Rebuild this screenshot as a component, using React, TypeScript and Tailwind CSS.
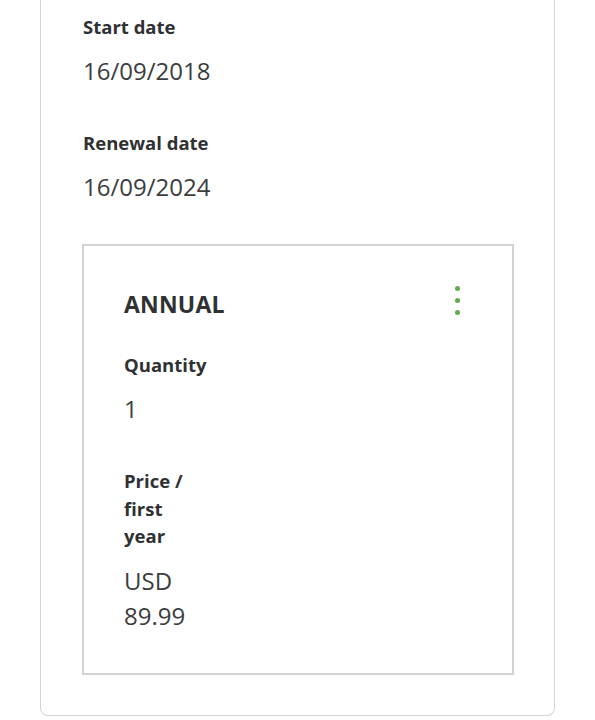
const font = { fontFamily: '"Open Sans", "Liberation Sans", sans-serif' }

function Field({ label, value, className = '' }: { label: string; value: string; className?: string }) {
  return (
    <div className={className}>
      <div className="text-[18.5px] font-bold leading-[27px] text-[#2f3133]">{label}</div>
      <div className="mt-[13px] text-[24px] leading-[35px] text-[#3b3d3f]">{value}</div>
    </div>
  )
}

function PlanCard() {
  return (
    <div className="ml-[41px] mt-[40px] w-[432px] border-2 border-[#d3d3d3] pb-[40px] pl-[40px] pr-[50px] pt-[43px]">
      <div className="flex items-start justify-between">
        <h2 className="text-[23px] font-bold leading-[30px] tracking-[0.2px] text-[#2f3133]">ANNUAL</h2>
        <button className="-mt-[3px] flex flex-col gap-[7px] px-[2px]" aria-label="More options">
          <span className="h-[5px] w-[5px] rounded-full bg-[#62aa52]" />
          <span className="h-[5px] w-[5px] rounded-full bg-[#62aa52]" />
          <span className="h-[5px] w-[5px] rounded-full bg-[#62aa52]" />
        </button>
      </div>

      <Field label="Quantity" value="1" className="mt-[32px]" />

      <div className="mt-[41px] w-[70px]">
        <div className="text-[18.5px] font-bold leading-[27.5px] text-[#2f3133]">Price / first year</div>
        <div className="mt-[13px] text-[24px] leading-[35px] text-[#3b3d3f]">USD 89.99</div>
      </div>
    </div>
  )
}

export default function App() {
  return (
    <main className="min-h-screen bg-white" style={font}>
      <section className="ml-[40px] w-[515px] rounded-b-lg border-x border-b border-[#d4d4d4] pb-[40px] pt-[13px]">
        <div className="pl-[42px]">
          <Field label="Start date" value="16/09/2018" />
          <Field label="Renewal date" value="16/09/2024" className="mt-[41px]" />
        </div>
        <PlanCard />
      </section>
    </main>
  )
}
